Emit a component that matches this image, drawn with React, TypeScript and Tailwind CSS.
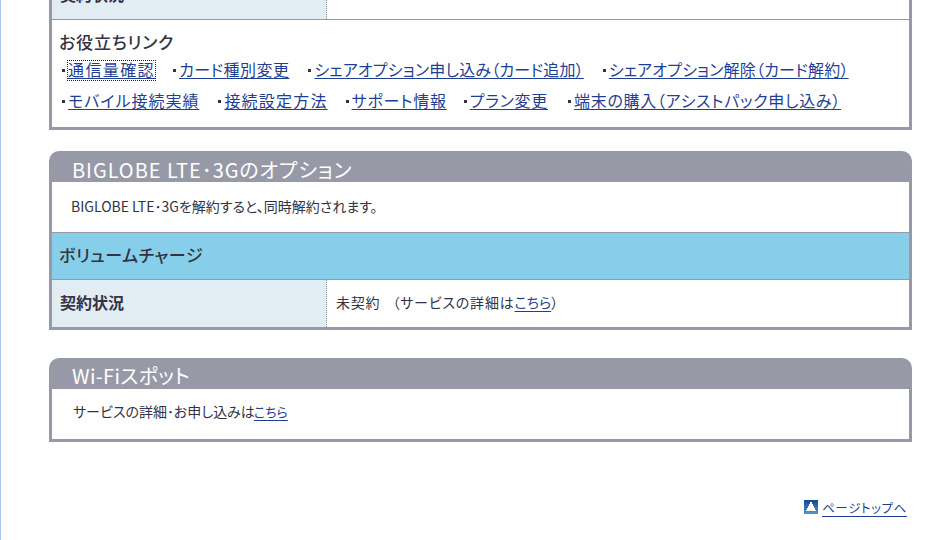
const jp = "font-['Noto_Sans_CJK_JP','Noto_Sans',sans-serif] [font-feature-settings:'palt']";

function Bullet({ href, track, focus }: { href: string; track: string; focus?: boolean }) {
  return (
    <li className="flex items-start whitespace-nowrap">
      <span className="mt-[8px] mr-[3px] h-[3px] w-[3px] bg-[#333344]" />
      <a
        href="#"
        onClick={(e) => e.preventDefault()}
        className={`block h-[19px] text-[16px] leading-[17px] text-[#1f3f94] underline underline-offset-[2px] ${track} ${
          focus ? "outline-1 outline-dotted outline-[#222]" : ""
        }`}
      >
        {href}
      </a>
    </li>
  );
}

function Header({ title, track }: { title: string; track: string }) {
  return (
    <div
      className={`flex h-[31px] items-end rounded-t-[10px] bg-[#9899a7] pl-[23px] text-[20px] leading-[24px] text-white ${track}`}
    >
      {title}
    </div>
  );
}

function InfoRow({ label, children }: { label: string; children?: React.ReactNode }) {
  return (
    <div className="flex h-[47px]">
      <div className="flex w-[275px] items-center border-r border-dotted border-r-[#8a9aa8] bg-[#e1ecf3] pb-[3px] pl-[8px] text-[16px] font-bold text-[#333344]">
        {label}
      </div>
      <div className="flex flex-1 items-center pb-[2px] pl-[9px] text-[14px] text-[#333344]">{children}</div>
    </div>
  );
}

export default function App() {
  return (
    <div className={`h-[540px] w-[946px] overflow-hidden border-l border-l-[#a9c6e8] bg-white ${jp}`}>
      <div className="ml-[48px] mt-[-28px] w-[863px]">
        <section className="border-x-[3px] border-b-[3px] border-[#9899a7]">
          <InfoRow label="契約状況" />
          <div className="h-[108px] border-t border-t-[#9899a7] pl-[7px] pt-[12px]">
            <h3 className="h-[20px] text-[17px] font-medium leading-[20px] tracking-[0.8px] text-[#333344]">お役立ちリンク</h3>
            <ul className="mt-[9px] flex h-[19px] pl-[3px]">
              <Bullet href="通信量確認" track="tracking-[1.4px]" focus />
              <div className="w-[18px]" />
              <Bullet href="カード種別変更" track="tracking-[0.45px]" />
              <div className="w-[19px]" />
              <Bullet href="シェアオプション申し込み（カード追加）" track="tracking-[0.2px]" />
              <div className="w-[19px]" />
              <Bullet href="シェアオプション解除（カード解約）" track="tracking-[0.2px]" />
            </ul>
            <ul className="mt-[12px] flex h-[19px] pl-[3px]">
              <Bullet href="モバイル接続実績" track="tracking-[1px]" />
              <div className="w-[19px]" />
              <Bullet href="接続設定方法" track="tracking-[1.2px]" />
              <div className="w-[18px]" />
              <Bullet href="サポート情報" track="tracking-[0.75px]" />
              <div className="w-[17px]" />
              <Bullet href="プラン変更" track="tracking-[0.7px]" />
              <div className="w-[20px]" />
              <Bullet href="端末の購入（アシストパック申し込み）" track="tracking-[0.7px]" />
            </ul>
          </div>
        </section>

        <section className="mt-[21px]">
          <Header title="BIGLOBE LTE･3Gのオプション" track="tracking-[0.95px]" />
          <div className="border-x-[3px] border-b-[3px] border-[#9899a7]">
            <div className="flex h-[50px] items-center pb-[2px] pl-[19px] text-[14px] text-[#333344]">
              BIGLOBE LTE･3Gを解約すると、同時解約されます。
            </div>
            <div className="flex h-[48px] items-center border-y border-y-[#9899a7] bg-[#87ceeb] pb-[2px] pl-[7px] text-[17px] font-medium tracking-[0.55px] text-[#333344]">
              ボリュームチャージ
            </div>
            <InfoRow label="契約状況">
              <span>
                <span className="tracking-[0.8px]">未契約</span>
                <span className="ml-[12px] tracking-[0.8px]">（サービスの詳細は</span>
                <a href="#" className="text-[#1f3f94] underline underline-offset-[3px]">
                  こちら
                </a>
                ）
              </span>
            </InfoRow>
          </div>
        </section>

        <section className="mt-[28px]">
          <Header title="Wi-Fiスポット" track="tracking-[0.35px] pb-[1px]" />
          <div className="flex h-[53px] items-center border-x-[3px] border-b-[3px] border-[#9899a7] pb-[5px] pl-[21px] text-[14px] text-[#333344]">
            <span>
              サービスの詳細･お申し込みは
              <a href="#" className="-ml-[1px] text-[13px] text-[#1f3f94] underline underline-offset-[3px]">
                こちら
              </a>
            </span>
          </div>
        </section>

        <div className="mt-[58px] flex items-start justify-end pr-[5px]">
          <svg viewBox="0 0 14 14" className="mr-[4px] h-[14px] w-[14px]" shapeRendering="crispEdges">
            <defs>
              <linearGradient id="g" x1="0" y1="0" x2="0" y2="1">
                <stop offset="0" stopColor="#0d4a96" />
                <stop offset="1" stopColor="#5b92cd" />
              </linearGradient>
            </defs>
            <rect width="14" height="14" fill="url(#g)" />
            <path d="M6 2h2v2h1v2h1v2h1v2h1v1H2v-1h1V8h1V6h1V4h1z" fill="#fff" />
          </svg>
          <a href="#" className="text-[12.5px] leading-[15px] tracking-[0.6px] text-[#1f3f94] underline underline-offset-[3px]">
            ページトップへ
          </a>
        </div>
      </div>
    </div>
  );
}
